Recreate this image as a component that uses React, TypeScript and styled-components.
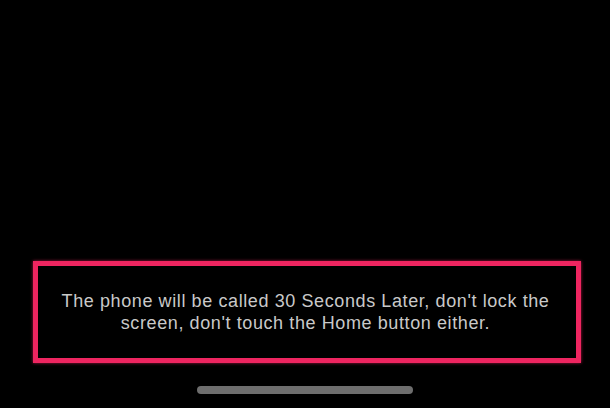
import React from 'react';
import styled, { createGlobalStyle } from 'styled-components';

const GlobalStyle = createGlobalStyle`
  html, body {
    margin: 0;
    padding: 0;
    background: #000;
  }
  #root {
    width: 610px;
    height: 408px;
  }
`;

const Screen = styled.div`
  width: 610px;
  height: 408px;
  background: #000;
  display: flex;
  flex-direction: column;
  justify-content: flex-end;
  box-sizing: border-box;
  padding: 0 29px 14px 33px;
  font-family: "Liberation Sans", Arial, sans-serif;
`;

const Notice = styled.div`
  height: 102px;
  box-sizing: border-box;
  border: 5px solid #ee2560;
  box-shadow: 0 0 3px rgba(238, 37, 96, 0.7);
  display: flex;
  align-items: center;
  justify-content: center;
  padding: 0 10px 0 7px;
`;

const Message = styled.p`
  margin: 0;
  color: #c9c9c9;
  font-size: 18px;
  line-height: 22px;
  text-align: center;
  letter-spacing: 0.6px;
`;

const HomeBar = styled.div`
  width: 216px;
  height: 8px;
  border-radius: 4px;
  background: #6e6e6e;
  align-self: center;
  margin: 23px 0 0 -4px;
`;

function App() {
  return (
    <>
      <GlobalStyle />
      <Screen>
        <Notice>
          <Message>
            The phone will be called 30 Seconds Later, don't lock the
            <br />
            screen, don't touch the Home button either.
          </Message>
        </Notice>
        <HomeBar />
      </Screen>
    </>
  );
}

export default App;
